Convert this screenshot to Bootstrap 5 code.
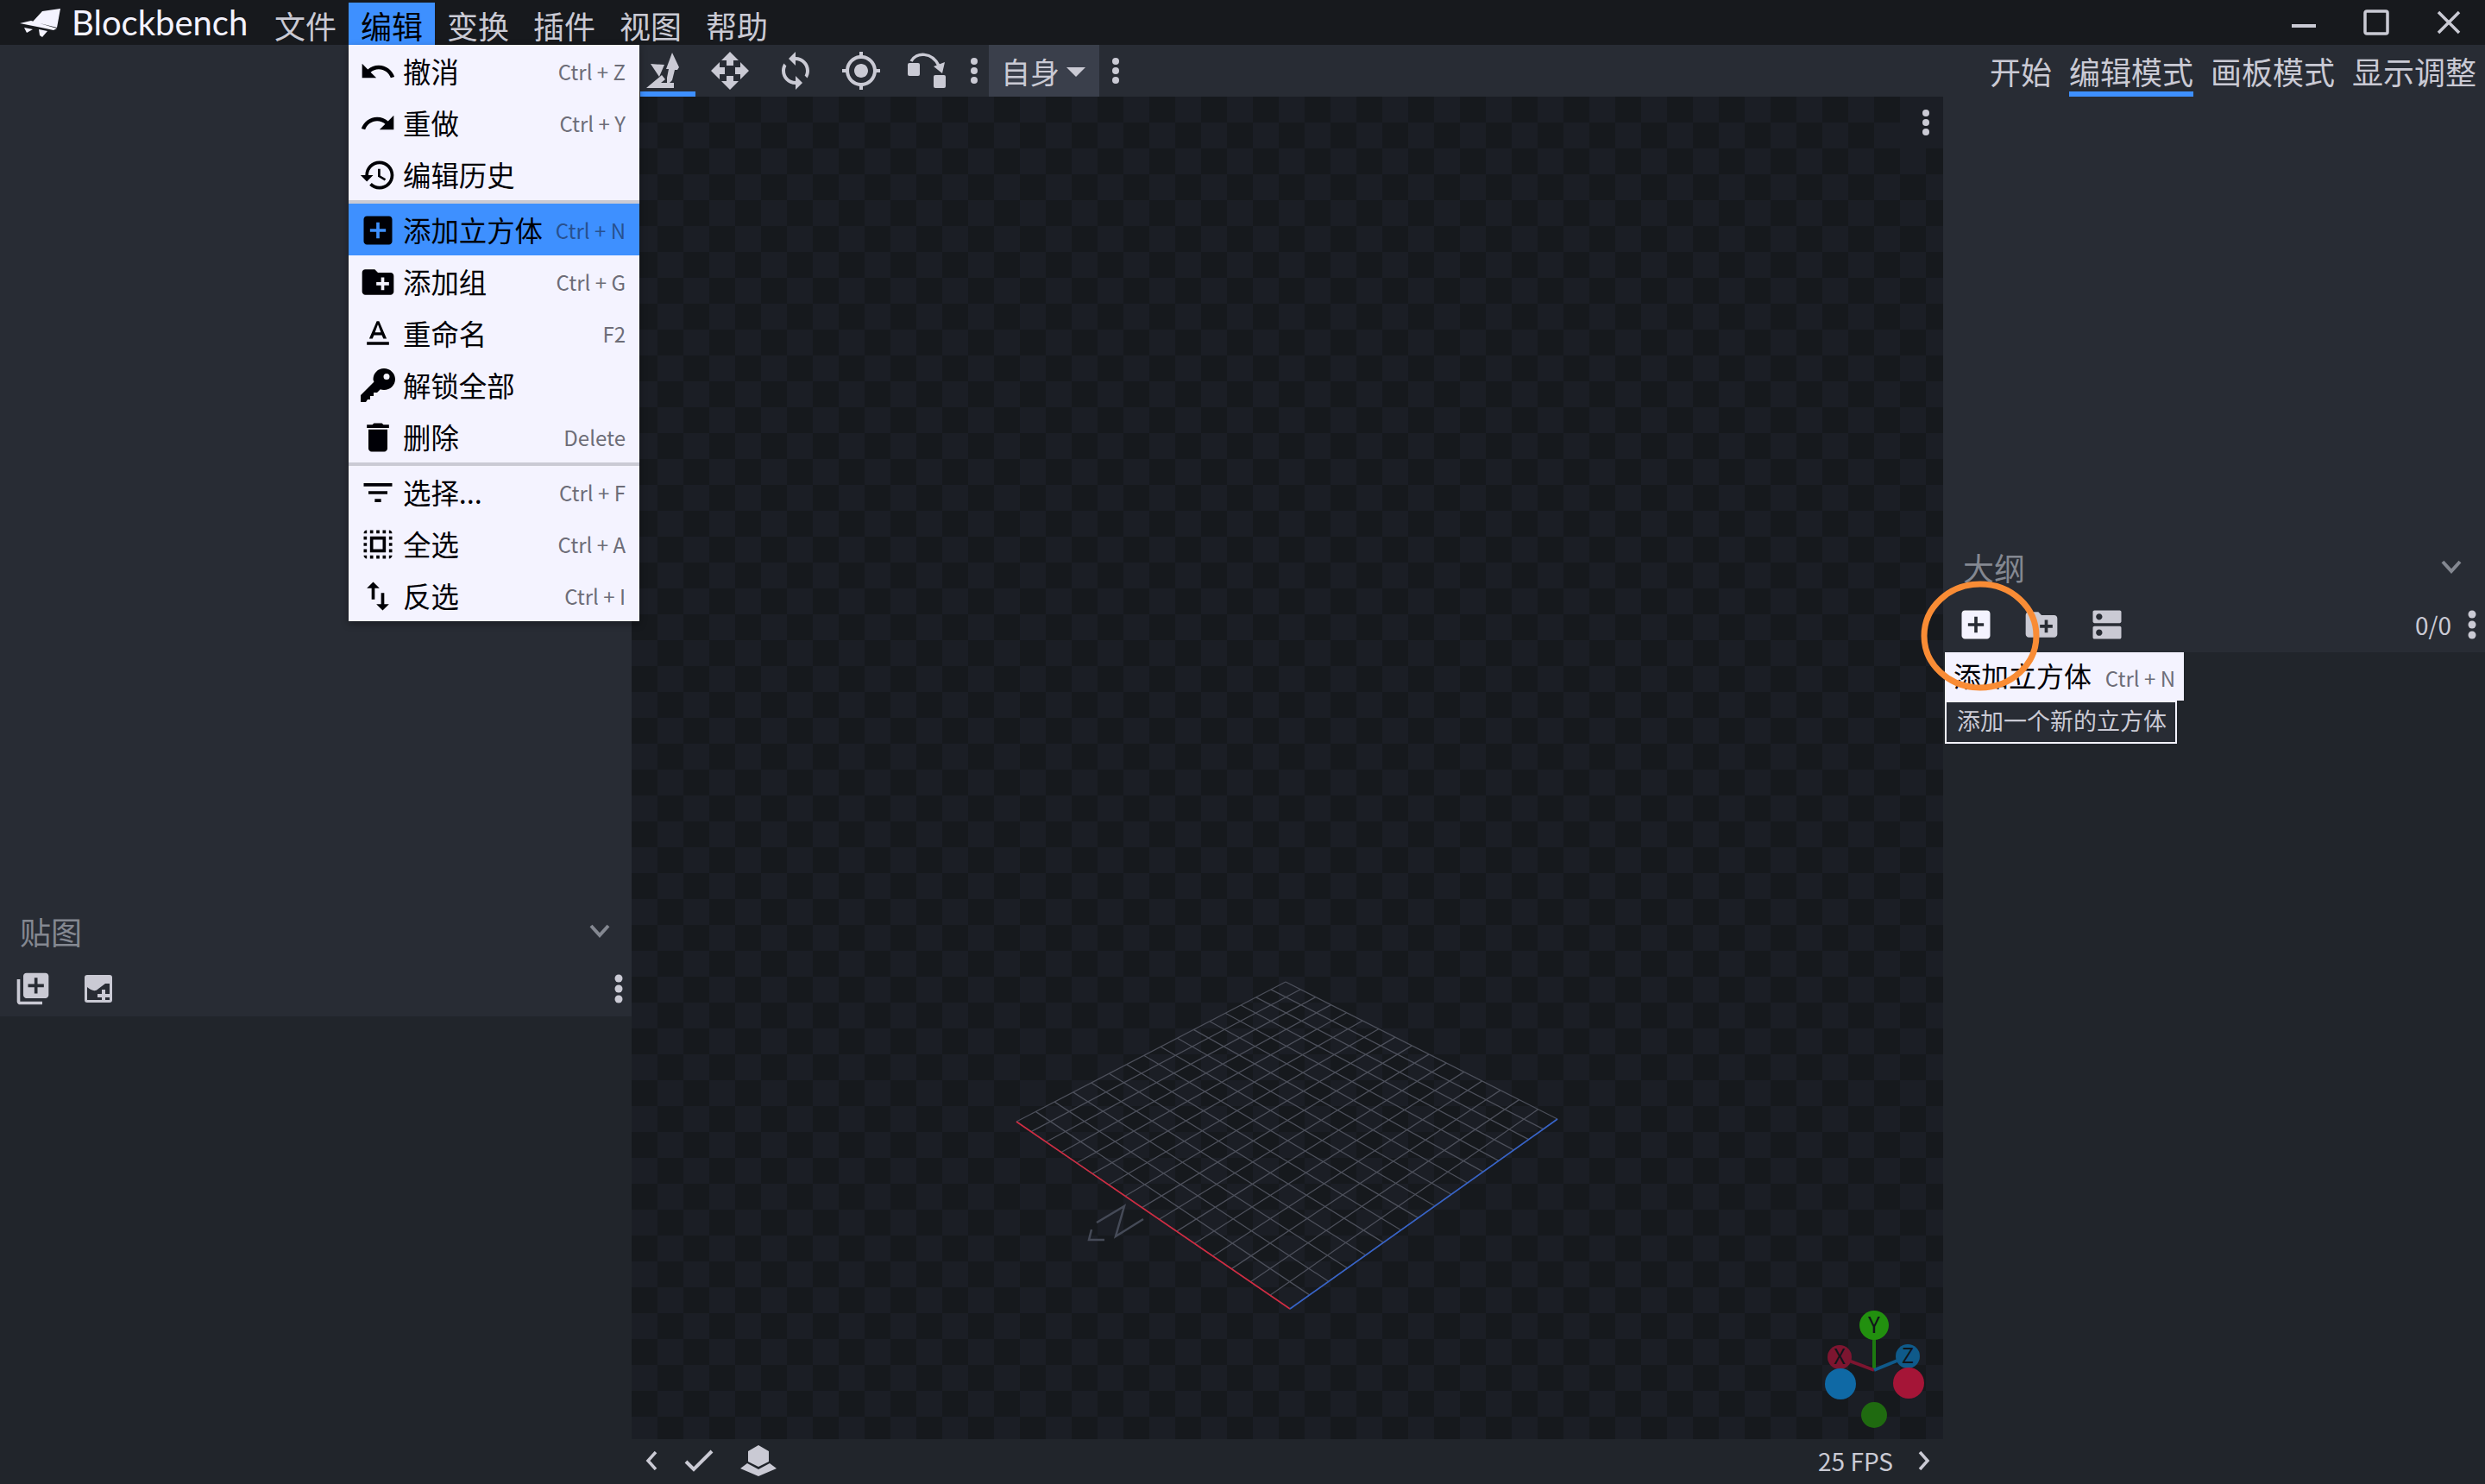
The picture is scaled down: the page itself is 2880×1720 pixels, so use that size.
<!DOCTYPE html>
<html lang="zh-CN">
<head>
<meta charset="UTF-8">
<title>Blockbench</title>
<link href="https://cdn.jsdelivr.net/npm/bootstrap@5.3.0/dist/css/bootstrap.min.css" rel="stylesheet">
<style>
html, body { height: 100%; }
body {
    width: 2880px; height: 1720px; overflow: hidden; position: relative;
    background: #21252b; color: #cacad4;
    font-family: "Noto Sans CJK SC", "Noto Sans", sans-serif;
}
svg { display: block; flex: none; }
.ico { fill: currentColor; }
/* title bar */
.title-bar { height: 52px; background: #17191d; }
.logo-wrap { width: 304px; padding-left: 20px; }
.logo-text { font-family: Lato, sans-serif; font-size: 40px; line-height: 50px; color: #f4f3ff; margin-left: 9px; }
.menu-name { width: 100px; height: 49px; margin-top: 3px; font-size: 36px; line-height: 52px; text-align: center; }
.menu-name.on { background: #3e90ff; color: #000006; }
.win-btn { width: 84px; height: 52px; }
.win-min { padding-top: 8px; }
/* columns */
.col-left { width: 732px; background: #282c34; }
.col-mid { width: 1520px; }
.col-right { width: 628px; background: #282c34; }
.sink { background: #21252b; }
/* toolbar */
.tool-row { height: 60px; background: #282c34; }
.tool-btn { width: 76px; height: 60px; position: relative; }
.tool-btn.on::after { content: ""; position: absolute; left: 10px; right: 2px; bottom: 0; height: 6px; background: #3e90ff; }
.dot-btn { width: 34px; height: 60px; }
.dot-gap { width: 38px; }
.space-pick { width: 128px; height: 60px; background: #3a3f4b; font-size: 34px; padding-left: 14px; }
.caret-down { width: 0; height: 0; border-left: 11px solid transparent; border-right: 11px solid transparent; border-top: 11px solid #cacad4; margin-left: 8px; margin-top: 3px; }
/* canvas */
.stage {
    position: relative; height: 1556px;
    background: conic-gradient(#1b1e25 25%, #16191d 0 50%, #1b1e25 0 75%, #16191d 0) 0 0 / 60px 60px;
}
.stage-dots { position: absolute; top: 0; right: 0; width: 50px; height: 60px; padding-right: 15px; background: #1b1e25; }
.foot-bar { height: 52px; padding-bottom: 3px; background: #21252b; font-size: 28px; }
.foot-check { margin-left: 31px; }
.foot-shape { margin-left: 31px; }
.fps { margin-right: 29px; }
.foot-chev { margin-right: 15px; }
/* tabs */
.tab-row { height: 60px; padding: 0 10px 0 54px; }
.mode-tab { height: 60px; font-size: 36px; line-height: 61px; position: relative; color: #cacad4; }
.mode-tab + .mode-tab { margin-left: 20px; }
.mode-tab.on { border-bottom: 6px solid #3e90ff; }
/* panels */
.panel-head { height: 60px; padding: 0 25px 3px 23px; font-size: 36px; color: #848891; }
.panel-tools { height: 68px; padding-top: 3px; }
.panel-left-fill { height: 998px; }
.panel-right-fill { height: 516px; }
.panel-head.in-right { padding-right: 27px; }
.count { font-size: 28px; margin-right: 19px; }
.tools-dots { margin-right: 10px; }
/* edit menu */
.edit-menu.dropdown-menu {
    position: absolute; left: 404px; top: 52px; width: 337px; margin: 0; padding: 0;
    border: 0; border-radius: 0; background: #f4f3ff; color: #000006;
    box-shadow: 0 3px 8px rgba(0, 0, 0, .35);
}
.edit-menu .dropdown-item {
    height: 60px; padding: 0 16px 0 12px; font-size: 32.4px; color: #000006;
    background: transparent;
}
.edit-menu .dropdown-item.on { background: #3e90ff; }
.edit-menu .dropdown-divider { margin: 0; height: 4px; border: 0; background: #cacad4; opacity: 1; }
.menu-glyph { margin-right: 7px; margin-top: 2px; }
.keys { margin-left: auto; margin-top: 2px; font-size: 24px; color: #6d6d78; }
.on .keys { color: #28518f; }
/* tooltip */
.tip-main { position: absolute; left: 2254px; top: 756px; width: 277px; height: 56px; padding: 0 10px; background: #f4f3ff; color: #000006; font-size: 32px; line-height: 52px; }
.tip-main .keys { line-height: 56px; }
.tip-sub { position: absolute; left: 2254px; top: 812px; width: 269px; height: 50px; border: 2px solid #f4f3ff; background: #282c34; color: #cacad4; font-size: 27px; line-height: 41px; padding-left: 12px; white-space: nowrap; }
.ring { position: absolute; left: 2220px; top: 665px; }
</style>
</head>
<body>

<div class="title-bar d-flex align-items-center">
    <div class="logo-wrap d-flex align-items-center">
        <svg width="54" height="36" viewBox="20 9 54 36" class="ico"><path fill="#f4f3ff" d="M49 14 70 11 66 33 38 26zM23 28 36 25 66 34 62 36 48 33zM28 33 38 35 31 39zM45 35 55 37 49 44 46 42z"/></svg>
        <span class="logo-text">Blockbench</span>
    </div>
    <div class="menu-name">文件</div>
    <div class="menu-name on">编辑</div>
    <div class="menu-name">变换</div>
    <div class="menu-name">插件</div>
    <div class="menu-name">视图</div>
    <div class="menu-name">帮助</div>
    <div class="ms-auto d-flex">
        <div class="win-btn win-min d-flex align-items-center justify-content-center"><svg width="28" height="4"><rect width="28" height="4" fill="#cacad4"/></svg></div>
        <div class="win-btn d-flex align-items-center justify-content-center"><svg width="30" height="30"><rect x="2" y="2" width="26" height="26" rx="2" fill="none" stroke="#cacad4" stroke-width="3.5"/></svg></div>
        <div class="win-btn d-flex align-items-center justify-content-center"><svg width="28" height="28"><path d="M2 2 26 26M26 2 2 26" stroke="#cacad4" stroke-width="3.5"/></svg></div>
    </div>
</div>

<div class="d-flex">
    <!-- left column: textures -->
    <div class="col-left d-flex flex-column">
        <div class="panel-left-fill"></div>
        <div class="panel-head d-flex align-items-center justify-content-between">
            <span>贴图</span>
            <svg width="24" height="16" viewBox="0 0 24 16"><path d="M2 2 12 13 22 2" fill="none" stroke="#848891" stroke-width="4"/></svg>
        </div>
        <div class="panel-tools d-flex align-items-center">
            <div class="tool-btn d-flex align-items-center justify-content-center"><svg class="ico" width="44" height="44" viewBox="0 0 24 24"><path d="M4 6H2v14c0 1.100.9 2 2 2h14v-2H4V6zm16-4H8c-1.100 0-2 .9-2 2v12c0 1.100.9 2 2 2h12c1.100 0 2-.9 2-2V4c0-1.100-.9-2-2-2zm-1 9h-4v4h-2v-4H9V9h4V5h2v4h4v2z"/></svg></div>
            <div class="tool-btn d-flex align-items-center justify-content-center"><svg width="32" height="32" viewBox="0 0 32 32"><rect width="32" height="32" rx="3" fill="#cacad4"/><path fill="#282c34" d="M3 14C8 18 12 20 16 16L24 10H29V29H3z"/><path fill="#cacad4" d="M20 17h4v5h5v4h-5v3h-4v-3h-5v-4h5z"/></svg></div>
            <div class="ms-auto tools-dots"><svg width="10" height="34" viewBox="0 0 10 34" class="ico"><circle cx="5" cy="5" r="4.500"/><circle cx="5" cy="17" r="4.500"/><circle cx="5" cy="29" r="4.500"/></svg></div>
        </div>
        <div class="sink flex-grow-1"></div>
    </div>

    <!-- middle column: viewport -->
    <div class="col-mid d-flex flex-column">
        <div class="tool-row d-flex align-items-center">
            <div class="tool-btn on d-flex align-items-center justify-content-center">
                <svg class="ico" width="48" height="48" viewBox="0 0 48 48"><path d="M33 3 41 20 39 23 36 23 33 35 27 41 27 32 29 22 26 22zM8 16 24 17 18 31zM3 44 21 29 25 34 20 38 35 38 35 44z"/></svg>
            </div>
            <div class="tool-btn d-flex align-items-center justify-content-center"><svg class="ico" width="48" height="48" viewBox="0 0 24 24"><path d="M10 9h4V6h3l-5-5-5 5h3v3zm-1 1H6V7l-5 5 5 5v-3h3v-4zm14 2l-5-5v3h-3v4h3v3l5-5zm-9 3h-4v3H7l5 5 5-5h-3v-3z"/></svg></div>
            <div class="tool-btn d-flex align-items-center justify-content-center"><svg class="ico" width="48" height="48" viewBox="0 0 24 24"><path d="M12 4V1L8 5l4 4V6c3.310 0 6 2.690 6 6 0 1.010-.25 1.970-.7 2.800l1.460 1.460C19.540 15.030 20 13.570 20 12c0-4.420-3.580-8-8-8zm0 14c-3.310 0-6-2.690-6-6 0-1.010.25-1.970.7-2.800L5.240 7.740C4.460 8.970 4 10.430 4 12c0 4.420 3.580 8 8 8v3l4-4-4-4v3z"/></svg></div>
            <div class="tool-btn d-flex align-items-center justify-content-center"><svg class="ico" width="48" height="48" viewBox="0 0 24 24"><path d="M12 8c-2.210 0-4 1.790-4 4s1.790 4 4 4 4-1.790 4-4-1.790-4-4-4zm8.940 3c-.46-4.170-3.770-7.480-7.940-7.940V1h-2v2.060C6.830 3.520 3.520 6.830 3.060 11H1v2h2.060c.46 4.170 3.770 7.480 7.940 7.940V23h2v-2.060c4.170-.46 7.480-3.770 7.940-7.940H23v-2h-2.060zM12 19c-3.870 0-7-3.130-7-7s3.130-7 7-7 7 3.130 7 7-3.130 7-7 7z"/></svg></div>
            <div class="tool-btn d-flex align-items-center justify-content-center"><svg class="ico" width="48" height="48" viewBox="0 0 48 48"><rect x="2" y="15" width="14" height="15" rx="2"/><rect x="32" y="29" width="14" height="15" rx="2"/><path d="M6 13C12 2 30 2 38 18" fill="none" stroke="currentColor" stroke-width="3.500"/><path d="M42 27 32 19 45 14z"/></svg></div>
            <div class="dot-btn d-flex align-items-center justify-content-center"><svg width="10" height="34" viewBox="0 0 10 34" class="ico"><circle cx="5" cy="6" r="4"/><circle cx="5" cy="17" r="4"/><circle cx="5" cy="28" r="4"/></svg></div>
            <div class="space-pick d-flex align-items-center">自身<span class="caret-down"></span></div>
            <div class="dot-gap d-flex align-items-center justify-content-center"><svg width="10" height="34" viewBox="0 0 10 34" class="ico"><circle cx="5" cy="6" r="4"/><circle cx="5" cy="17" r="4"/><circle cx="5" cy="28" r="4"/></svg></div>
        </div>

        <div class="stage">
            <svg id="scene" width="1520" height="1556" viewBox="732 112 1520 1556">
                <g id="floor" stroke="#4d505b" stroke-width="1.300" fill="none"></g>
                <path d="M1178 1300 1495 1517" stroke="#d02a40" stroke-width="1.600"/>
                <path d="M1495 1517 1805 1297" stroke="#3562c8" stroke-width="1.600"/>
                <path d="M1271 1417 1303 1398 1293 1433 1325 1413M1265 1425 1262 1437 1280 1437" fill="none" stroke="#454a57" stroke-width="2.500"/>
                <!-- orientation gizmo -->
                <path d="M2172 1588V1536" stroke="#1d7a10" stroke-width="4"/>
                <path d="M2172 1588 2132 1573" stroke="#7d1530" stroke-width="4"/>
                <path d="M2172 1588 2211 1572" stroke="#0f5a8a" stroke-width="4"/>
                <circle cx="2172" cy="1536" r="17" fill="#22900f"/>
                <circle cx="2132" cy="1573" r="14" fill="#7d1530"/>
                <circle cx="2211" cy="1572" r="14" fill="#0f5a8a"/>
                <circle cx="2133" cy="1604" r="18" fill="#0f69a5"/>
                <circle cx="2212" cy="1603" r="18" fill="#a51537"/>
                <circle cx="2172" cy="1640" r="15" fill="#1f6a10"/>
                <text x="2172" y="1545" text-anchor="middle" font-size="26" fill="#10151a" font-family="Noto Sans CJK SC, sans-serif">Y</text>
                <text x="2132" y="1581" text-anchor="middle" font-size="24" fill="#10151a" font-family="Noto Sans CJK SC, sans-serif">X</text>
                <text x="2211" y="1580" text-anchor="middle" font-size="24" fill="#10151a" font-family="Noto Sans CJK SC, sans-serif">Z</text>
            </svg>
            <div class="stage-dots d-flex align-items-center justify-content-end"><svg width="10" height="34" viewBox="0 0 10 34" class="ico"><circle cx="5" cy="6" r="4"/><circle cx="5" cy="17" r="4"/><circle cx="5" cy="28" r="4"/></svg></div>
        </div>

        <div class="foot-bar d-flex align-items-center">
            <svg class="ms-3" width="14" height="22" viewBox="0 0 14 22"><path d="M12 1 3 11 12 21" fill="none" stroke="#cacad4" stroke-width="3.500"/></svg>
            <svg class="foot-check" width="34" height="26" viewBox="0 0 34 26"><path d="M2 14 11 23 32 2" fill="none" stroke="#cacad4" stroke-width="4"/></svg>
            <svg class="foot-shape" width="42" height="36" viewBox="0 0 42 36"><path fill="#cacad4" d="M21 0 33 7V19L21 25 9 19V7zM8 21 21 28 34 21 42 27 21 36 0 27z"/></svg>
            <span class="ms-auto fps">25 FPS</span>
            <svg class="foot-chev" width="14" height="22" viewBox="0 0 14 22"><path d="M2 1 11 11 2 21" fill="none" stroke="#cacad4" stroke-width="3.500"/></svg>
        </div>
    </div>

    <!-- right column: outliner -->
    <div class="col-right d-flex flex-column">
        <div class="tab-row d-flex justify-content-start">
            <div class="mode-tab">开始</div>
            <div class="mode-tab on">编辑模式</div>
            <div class="mode-tab">画板模式</div>
            <div class="mode-tab">显示调整</div>
        </div>
        <div class="panel-right-fill"></div>
        <div class="panel-head in-right d-flex align-items-center justify-content-between">
            <span>大纲</span>
            <svg width="24" height="16" viewBox="0 0 24 16"><path d="M2 2 12 13 22 2" fill="none" stroke="#848891" stroke-width="4"/></svg>
        </div>
        <div class="panel-tools d-flex align-items-center">
            <div class="tool-btn d-flex align-items-center justify-content-center"><svg width="44" height="44" viewBox="0 0 24 24" fill="#f4f3ff"><path d="M19 3H5c-1.110 0-2 .9-2 2v14c0 1.100.89 2 2 2h14c1.100 0 2-.9 2-2V5c0-1.100-.9-2-2-2zm-2 10h-4v4h-2v-4H7v-2h4V7h2v4h4v2z"/></svg></div>
            <div class="tool-btn d-flex align-items-center justify-content-center"><svg class="ico" width="44" height="44" viewBox="0 0 24 24"><path d="M20 6h-8l-2-2H4c-1.110 0-1.990.89-1.990 2L2 18c0 1.110.89 2 2 2h16c1.110 0 2-.89 2-2V8c0-1.110-.89-2-2-2zm-1 8h-3v3h-2v-3h-3v-2h3V9h2v3h3v2z"/></svg></div>
            <div class="tool-btn d-flex align-items-center justify-content-center"><svg class="ico" width="44" height="44" viewBox="0 0 24 24"><path d="M20 13H4c-.55 0-1 .45-1 1v6c0 .55.45 1 1 1h16c.55 0 1-.45 1-1v-6c0-.55-.45-1-1-1zM7 19c-1.100 0-2-.9-2-2s.9-2 2-2 2 .9 2 2-.9 2-2 2zM20 3H4c-.55 0-1 .45-1 1v6c0 .55.45 1 1 1h16c.55 0 1-.45 1-1V4c0-.55-.45-1-1-1zM7 9c-1.100 0-2-.9-2-2s.9-2 2-2 2 .9 2 2-.9 2-2 2z"/></svg></div>
            <span class="ms-auto count">0/0</span>
            <div class="tools-dots"><svg width="10" height="34" viewBox="0 0 10 34" class="ico"><circle cx="5" cy="5" r="4.500"/><circle cx="5" cy="17" r="4.500"/><circle cx="5" cy="29" r="4.500"/></svg></div>
        </div>
        <div class="sink flex-grow-1"></div>
    </div>
</div>

<!-- open edit menu -->
<div class="dropdown-menu show edit-menu">
    <div class="dropdown-item d-flex align-items-center"><svg class="ico menu-glyph" width="44" height="44" viewBox="0 0 24 24"><path d="M12.500 8c-2.650 0-5.050.99-6.900 2.600L2 7v9h9l-3.620-3.620c1.390-1.160 3.160-1.880 5.120-1.880 3.540 0 6.550 2.310 7.600 5.500l2.370-.78C21.080 11.030 17.150 8 12.500 8z"/></svg>撤消<span class="keys">Ctrl + Z</span></div>
    <div class="dropdown-item d-flex align-items-center"><svg class="ico menu-glyph" width="44" height="44" viewBox="0 0 24 24"><path d="M18.400 10.600C16.550 8.990 14.150 8 11.500 8c-4.650 0-8.580 3.030-9.960 7.220L3.900 16c1.050-3.190 4.050-5.500 7.600-5.500 1.950 0 3.730.72 5.120 1.880L13 16h9V7l-3.600 3.600z"/></svg>重做<span class="keys">Ctrl + Y</span></div>
    <div class="dropdown-item d-flex align-items-center"><svg class="ico menu-glyph" width="44" height="44" viewBox="0 0 24 24"><path d="M13 3c-4.970 0-9 4.030-9 9H1l3.890 3.890.07.14L9 12H6c0-3.870 3.130-7 7-7s7 3.130 7 7-3.130 7-7 7c-1.930 0-3.680-.79-4.940-2.060l-1.420 1.420C8.270 19.990 10.510 21 13 21c4.970 0 9-4.030 9-9s-4.030-9-9-9zm-1 5v5l4.280 2.540.72-1.210-3.500-2.080V8H12z"/></svg>编辑历史</div>
    <hr class="dropdown-divider">
    <div class="dropdown-item on d-flex align-items-center"><svg class="ico menu-glyph" width="44" height="44" viewBox="0 0 24 24"><path d="M19 3H5c-1.110 0-2 .9-2 2v14c0 1.100.89 2 2 2h14c1.100 0 2-.9 2-2V5c0-1.100-.9-2-2-2zm-2 10h-4v4h-2v-4H7v-2h4V7h2v4h4v2z"/></svg>添加立方体<span class="keys">Ctrl + N</span></div>
    <div class="dropdown-item d-flex align-items-center"><svg class="ico menu-glyph" width="44" height="44" viewBox="0 0 24 24"><path d="M20 6h-8l-2-2H4c-1.110 0-1.990.89-1.990 2L2 18c0 1.110.89 2 2 2h16c1.110 0 2-.89 2-2V8c0-1.110-.89-2-2-2zm-1 8h-3v3h-2v-3h-3v-2h3V9h2v3h3v2z"/></svg>添加组<span class="keys">Ctrl + G</span></div>
    <div class="dropdown-item d-flex align-items-center"><svg class="ico menu-glyph" width="44" height="44" viewBox="0 0 24 24"><path d="M5 17v2h14v-2H5zm4.500-4.200h5l.9 2.200h2.100L12.750 4h-1.500L6.500 15h2.100l.9-2.200zM12 5.980L13.870 11h-3.740L12 5.980z"/></svg>重命名<span class="keys">F2</span></div>
    <div class="dropdown-item d-flex align-items-center"><svg class="ico menu-glyph" width="44" height="44" viewBox="0 0 44 44"><path fill-rule="evenodd" d="M29 2C36 2 42 7.500 42 14.500S36 27 29 27C27.500 27 26 26.700 24.800 26.200L21 30H17V34H13V38H10L8 41H2V33L17.500 17.500C17 16.300 16.500 15.500 16.500 14.500 16.500 7.500 22 2 29 2ZM32 8A3.500 3.500 0 1 0 32 15 3.500 3.500 0 1 0 32 8Z"/></svg>解锁全部</div>
    <div class="dropdown-item d-flex align-items-center"><svg class="ico menu-glyph" width="44" height="44" viewBox="0 0 24 24"><path d="M6 19c0 1.100.9 2 2 2h8c1.100 0 2-.9 2-2V7H6v12zM19 4h-3.500l-1-1h-5l-1 1H5v2h14V4z"/></svg>删除<span class="keys">Delete</span></div>
    <hr class="dropdown-divider">
    <div class="dropdown-item d-flex align-items-center"><svg class="ico menu-glyph" width="44" height="44" viewBox="0 0 24 24"><path d="M10 18h4v-2h-4v2zM3 6v2h18V6H3zm3 7h12v-2H6v2z"/></svg>选择...<span class="keys">Ctrl + F</span></div>
    <div class="dropdown-item d-flex align-items-center"><svg class="ico menu-glyph" width="44" height="44" viewBox="0 0 24 24"><path d="M3 5h2V3c-1.100 0-2 .9-2 2zm0 8h2v-2H3v2zm4 8h2v-2H7v2zM3 9h2V7H3v2zm10-6h-2v2h2V3zm6 0v2h2c0-1.100-.9-2-2-2zM5 21v-2H3c0 1.100.9 2 2 2zm-2-4h2v-2H3v2zM9 3H7v2h2V3zm2 18h2v-2h-2v2zm8-8h2v-2h-2v2zm0 8c1.100 0 2-.9 2-2h-2v2zm0-12h2V7h-2v2zm0 8h2v-2h-2v2zm-4 4h2v-2h-2v2zm0-16h2V3h-2v2zM7 17h10V7H7v10zm2-8h6v6H9V9z"/></svg>全选<span class="keys">Ctrl + A</span></div>
    <div class="dropdown-item d-flex align-items-center"><svg class="ico menu-glyph" width="44" height="44" viewBox="0 0 24 24"><path d="M16 17.010V10h-2v7.010h-3L15 21l4-3.990h-3zM9 3L5 6.990h3V14h2V6.990h3L9 3z"/></svg>反选<span class="keys">Ctrl + I</span></div>
</div>

<!-- tooltip for the hovered tool -->
<div class="tip-main d-flex">添加立方体<span class="keys">Ctrl + N</span></div>
<div class="tip-sub">添加一个新的立方体</div>
<svg class="ring" width="150" height="144" viewBox="2220 665 150 144"><ellipse cx="2295" cy="737" rx="65" ry="60" fill="none" stroke="#f98c35" stroke-width="7"/></svg>

<script>
    // floor grid, projected from the four corners of the 16x16 square
    const [x0, y0, x1, y1, x2, y2, x3, y3] = [1490, 1138, 1805, 1297, 1495, 1517, 1178, 1300];
    const sx = x0 - x1 + x2 - x3, sy = y0 - y1 + y2 - y3;
    const dx1 = x1 - x2, dx2 = x3 - x2, dy1 = y1 - y2, dy2 = y3 - y2;
    const den = dx1 * dy2 - dx2 * dy1;
    const g = (sx * dy2 - dx2 * sy) / den, h = (dx1 * sy - sx * dy1) / den;
    const a = x1 - x0 + g * x1, b = x3 - x0 + h * x3, d = y1 - y0 + g * y1, e = y3 - y0 + h * y3;
    function project(u, v) {
        const w = g * u + h * v + 1;
        return ((a * u + b * v + x0) / w).toFixed(1) + " " + ((d * u + e * v + y0) / w).toFixed(1);
    }
    let path = "";
    for (let i = 0; i <= 16; i++) {
        const t = i / 16;
        path += "M" + project(t, 0) + " L" + project(t, 1) + " M" + project(0, t) + " L" + project(1, t) + " ";
    }
    const floorPath = document.createElementNS("http://www.w3.org/2000/svg", "path");
    floorPath.setAttribute("d", path);
    document.getElementById("floor").appendChild(floorPath);
</script>
<script src="https://cdn.jsdelivr.net/npm/bootstrap@5.3.0/dist/js/bootstrap.bundle.min.js"></script>
</body>
</html>
